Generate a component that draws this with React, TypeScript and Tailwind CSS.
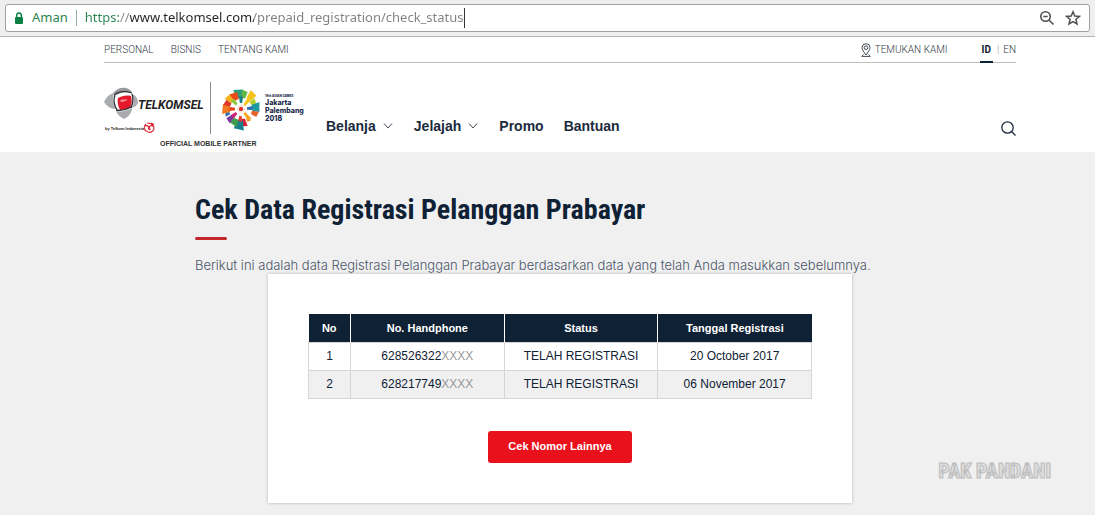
import type { ReactNode } from "react";

const registrations = [
  { no: 1, phone: "628526322", status: "TELAH REGISTRASI", date: "20 October 2017" },
  { no: 2, phone: "628217749", status: "TELAH REGISTRASI", date: "06 November 2017" },
];

// angle, inner radius, outer radius, half width, colour
const petals: [number, number, number, number, string][] = [
  [-8, 11, 20, 5, "#2a9d7a"],
  [12, 11, 19, 3, "#63b446"],
  [38, 12, 21, 4, "#f4c21a"],
  [60, 11, 17, 3, "#b8cf2f"],
  [84, 11, 19, 5, "#1f9aa0"],
  [108, 11, 18, 3, "#e8622c"],
  [146, 11, 15, 2, "#f08a24"],
  [168, 10, 18, 3, "#d81f36"],
  [186, 11, 21, 5, "#167f8c"],
  [206, 11, 18, 4, "#3f9c4c"],
  [228, 10, 18, 3, "#7a3a9b"],
  [250, 12, 17, 2, "#2d6fb5"],
  [270, 11, 19, 5, "#ee7a22"],
  [292, 11, 18, 3, "#e03a2e"],
  [314, 11, 19, 4, "#f4b31a"],
  [334, 10, 18, 4, "#e84a1c"],
  [0, 6, 13, 2, "#16808a"],
  [40, 5, 13, 2, "#f9c51d"],
  [85, 6, 12, 2, "#2f6db0"],
  [140, 5, 14, 2, "#f9a51d"],
  [184, 7, 13, 2, "#e23a2e"],
  [228, 6, 12, 2, "#d81f76"],
  [270, 6, 12, 2, "#e8411c"],
  [316, 6, 13, 2, "#8cc63f"],
];

function AddressBar() {
  return (
    <div className="border-b border-[#b4b4b4] bg-[#efefef] px-[5px] pt-1 pb-1">
      <div className="flex h-7 items-center rounded-[3px] border border-[#a0a0a0] bg-white pr-2 pl-2 font-['Noto_Sans',sans-serif] text-[13px]">
        <svg width="10" height="12" viewBox="0 0 10 12" className="shrink-0">
          <rect x="1" y="5" width="8" height="7" rx="1" fill="#0b8043" />
          <path d="M2.7 6V3.3a2.3 2.3 0 0 1 4.6 0V6" fill="none" stroke="#0b8043" strokeWidth="1.4" />
        </svg>
        <span className="ml-2 text-[#2b8450]">Aman</span>
        <span className="mx-2 h-4 w-px bg-[#8fb8a0]" />
        <input
          aria-label="Address"
          defaultValue="https://www.telkomsel.com/prepaid_registration/check_status"
          className="field-sizing-content border-r border-[#333] bg-[linear-gradient(90deg,#2b8450_34px,#8a8a8a_34px,#8a8a8a_45px,#222_45px,#222_169px,#808080_169px)] bg-clip-text text-transparent outline-none"
        />
        <div className="ml-auto flex items-center gap-2.5">
          <button aria-label="Zoom">
            <svg width="16" height="16" viewBox="0 0 16 16" fill="none" stroke="#505050" strokeWidth="1.6">
              <circle cx="6.5" cy="6.5" r="4.7" />
              <path d="M10 10l4.5 4.5M4.3 6.5h4.4" />
            </svg>
          </button>
          <button aria-label="Bookmark">
            <svg width="16" height="16" viewBox="0 0 16 16" fill="none" stroke="#505050" strokeWidth="1.5">
              <path d="M8 1.8l1.8 4.2 4.6.4-3.5 3 1.1 4.5L8 11.5l-4 2.4 1.1-4.5-3.5-3 4.6-.4z" />
            </svg>
          </button>
        </div>
      </div>
    </div>
  );
}

function Logo() {
  return (
    <svg width="206" height="70" viewBox="0 0 206 70" role="img" aria-label="Telkomsel">
      {/* emblem */}
      <path d="M0 22c3-6 6-8 10-9-2 5-1 11 2 16C6 29 3 26 0 22z" fill="#a9abae" />
      <path d="M9 13C13 8 18 7 22 8c3 1 5 2 6 4-6-1-11 0-15 3z" fill="#97999c" />
      <path d="M29 14c3 2 5 5 5 9-1 2-3 4-6 5 2-4 2-9 1-14z" fill="#a9abae" />
      <path d="M12 31c5 1 10 0 16-3 0 4-3 9-8 11-4-2-7-5-8-8z" fill="#a9abae" />
      <path d="M14 18c4-2 8-3 13-2 1 4 1 8-1 12-3 1-7 2-10 2-2-4-3-8-2-12z" fill="#e3192b" />
      <path d="M16 20c3-1 5 0 7-1 1 1-3 3-6 3z" fill="#fff" opacity=".5" />
      <path
        d="M10 15c5-4 12-4 18-2M12 30c5 1 10 0 15-3M28 14c2 5 1 9-1 14M11 15c-2 5-1 10 2 15"
        fill="none"
        stroke="#2b2d30"
        strokeWidth="1.3"
      />
      <text x="34" y="29" fontSize="12" className="fill-[#222] font-['Roboto',sans-serif] font-bold italic">
        TELKOMSEL
      </text>
      <text x="1" y="50" fontSize="4" className="fill-[#222] font-['Liberation_Sans',sans-serif] font-bold">
        by Telkom Indonesia
      </text>
      <g fill="none" stroke="#dc2635" strokeWidth="1.2">
        <path d="M42 44c-3 3-2 7 2 8 3 1 6-1 6-4 0-2-2-3-4-2s-2 3 0 4" />
        <path d="M41 46c3-1 5 1 5 4M43 43c3 0 5 1 6 3M47 43c1 0 2 1 3 2" />
      </g>
      <path d="M106.5 2v52" stroke="#8b8b8b" />
      {/* asian games sun */}
      <g transform="translate(137 29)">
        {petals.map(([angle, inner, outer, half, color]) => (
          <path
            key={`${angle}-${inner}`}
            transform={`rotate(${angle})`}
            d={`M${-half} ${-outer}L${half} ${1 - outer}L${half * 0.6} ${-inner}H${-half * 0.6}z`}
            fill={color}
          />
        ))}
        <circle r="3.4" fill="none" stroke="#f6b8a5" strokeWidth="1" strokeDasharray="1 1" />
        <circle r="2.2" fill="#e3342b" />
      </g>
      <g className="fill-[#1b2a4e] font-['Inter',sans-serif] font-extrabold">
        <text x="161" y="17" fontSize="3">18th ASIAN GAMES</text>
        <text x="161" y="25" fontSize="7">Jakarta</text>
        <text x="161" y="33" fontSize="7">Palembang</text>
        <text x="161" y="41" fontSize="7">2018</text>
      </g>
      <text x="56" y="66" fontSize="7" className="fill-[#333] font-['Liberation_Sans',sans-serif] font-bold">
        OFFICIAL MOBILE PARTNER
      </text>
    </svg>
  );
}

function NavLink({ children, menu }: { children: ReactNode; menu?: boolean }) {
  return (
    <a href="#" className="flex items-center gap-1.5">
      {children}
      {menu && (
        <svg width="12" height="6" viewBox="0 0 12 6" fill="none" stroke="#444c58">
          <path d="M2 .5l4 4.5 4-4.5" />
        </svg>
      )}
    </a>
  );
}

function Header() {
  return (
    <header className="bg-white pl-[25px]">
      <div className="mx-auto max-w-[912px]">
        <div className="flex h-[26px] items-stretch border-b border-[#bdbdbd] font-['Roboto',sans-serif] text-[10px] leading-[25px] font-light text-[#333b48]">
          <nav className="flex gap-[17px]">
            <a href="#">PERSONAL</a>
            <a href="#">BISNIS</a>
            <a href="#">TENTANG KAMI</a>
          </nav>
          <a href="#" className="ml-auto flex items-center gap-1">
            <svg width="10" height="14" viewBox="0 0 10 14" fill="none" stroke="#444c58">
              <path d="M5 12C3 9 1 7 1 4.7a4 4 0 0 1 8 0C9 7 7 9 5 12z" />
              <circle cx="5" cy="4.7" r="1.8" />
              <path d="M2.5 11.5L.8 13.4h8.4l-1.7-1.9" />
            </svg>
            TEMUKAN KAMI
          </a>
          <div className="ml-8 flex">
            <a href="#" className="-mb-px border-b-2 border-[#0f2135] px-0.5 font-bold text-[#0f2135]">ID</a>
            <span className="mx-1 text-[#999]">|</span>
            <a href="#">EN</a>
          </div>
        </div>
        <div className="flex h-[89px] items-end">
          <a href="#" className="mb-0.5">
            <Logo />
          </a>
          <nav className="mb-4 ml-4 flex gap-5 font-['Liberation_Sans',sans-serif] text-sm font-bold text-[#1b2a3d]">
            <NavLink menu>Belanja</NavLink>
            <NavLink menu>Jelajah</NavLink>
            <NavLink>Promo</NavLink>
            <NavLink>Bantuan</NavLink>
          </nav>
          <button aria-label="Cari" className="mb-4 ml-auto">
            <svg width="15" height="15" viewBox="0 0 15 15" fill="none" stroke="#1b2a3d" strokeWidth="1.3">
              <circle cx="6.5" cy="6.5" r="5.7" />
              <path d="M10.5 10.5l4 4" />
            </svg>
          </button>
        </div>
      </div>
    </header>
  );
}

function RegistrationTable() {
  return (
    <table className="w-full table-fixed border-collapse text-center text-[#0f2135]">
      <thead>
        <tr className="h-7 bg-[#0f2135] text-[11px] text-white">
          <th className="w-[42px] border-r border-white">No</th>
          <th className="border-r border-white">No. Handphone</th>
          <th className="border-r border-white">Status</th>
          <th>Tanggal Registrasi</th>
        </tr>
      </thead>
      <tbody className="text-xs">
        {registrations.map((row) => (
          <tr key={row.no} className="h-7 even:bg-[#f0f0f0]">
            <td className="border border-[#d5d5d5]">{row.no}</td>
            <td className="border border-[#d5d5d5]">
              {row.phone}
              <span className="text-[#999]">XXXX</span>
            </td>
            <td className="border border-[#d5d5d5]">{row.status}</td>
            <td className="border border-[#d5d5d5]">{row.date}</td>
          </tr>
        ))}
      </tbody>
    </table>
  );
}

export default function App() {
  return (
    <div className="relative flex min-h-screen flex-col bg-[#f0f0f0]">
      <AddressBar />
      <Header />
      <main className="pt-10 pb-3 pl-[25px] font-['Liberation_Sans',sans-serif]">
        <div className="mx-auto max-w-[730px]">
          <h1 className="font-['Roboto_Condensed','Roboto',sans-serif] text-[28px] leading-9 font-bold text-[#0f2135]">
            Cek Data Registrasi Pelanggan Prabayar
          </h1>
          <div className="mt-[9px] h-[3px] w-8 rounded-sm bg-[#c4262e]" />
          <p className="mt-4 font-['Inter',sans-serif] text-[13px] leading-[18px] font-light text-[#4a5568]">
            Berikut ini adalah data Registrasi Pelanggan Prabayar berdasarkan data yang telah Anda masukkan sebelumnya.
          </p>
          <section className="mx-auto w-4/5 bg-white px-10 py-10 text-center shadow-[0_0_3px_rgba(0,0,0,0.25)]">
            <RegistrationTable />
            <button className="mt-8 h-8 rounded-[3px] bg-[#e8111c] px-5 text-[11px] font-bold text-white">
              Cek Nomor Lainnya
            </button>
          </section>
        </div>
      </main>
      <div className="absolute right-11 bottom-8 font-['Roboto_Condensed','Roboto',sans-serif] text-xl leading-6 font-black text-[#dcdcdc] [-webkit-text-stroke:1px_#bdbdbd]">
        PAK PANDANI
      </div>
    </div>
  );
}
